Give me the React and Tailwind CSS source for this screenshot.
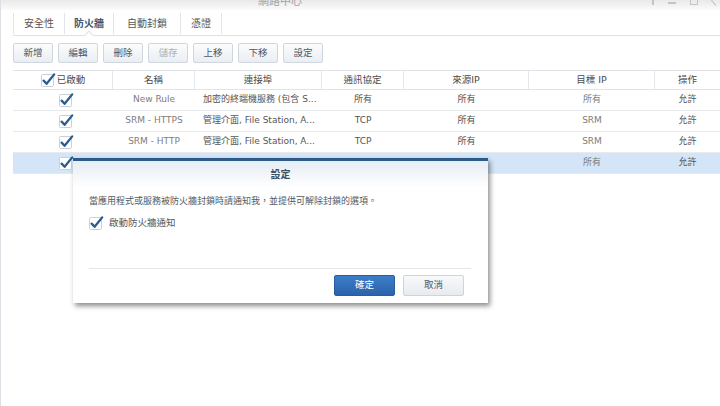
import React from "react";

const FONT = { fontFamily: '"DejaVu Sans", "Noto Sans CJK TC", sans-serif' };

function Check({ className = "" }) {
  return (
    <svg width="16" height="16" viewBox="0 0 16 16" className={className}>
      <rect x="1.5" y="2.5" width="12" height="12" rx="1" fill="#fff" stroke="#c9d0d8" />
      <path d="M3.6 8.6 L6.6 11.8 L14.2 2.4" fill="none" stroke="#2b5c90" strokeWidth="2.3" strokeLinecap="round" strokeLinejoin="round" />
    </svg>
  );
}

const cols = [
  "w-[100px]",
  "w-[82px]",
  "w-[127px]",
  "w-[82px]",
  "w-[125px]",
  "w-[126px]",
  "w-[65px]",
];

const rows = [
  { name: "New Rule", port: "加密的終端機服務 (包含 S...", proto: "所有", src: "所有", dst: "所有", act: "允許" },
  { name: "SRM - HTTPS", port: "管理介面, File Station, A...", proto: "TCP", src: "所有", dst: "SRM", act: "允許" },
  { name: "SRM - HTTP", port: "管理介面, File Station, A...", proto: "TCP", src: "所有", dst: "SRM", act: "允許" },
  { name: "", port: "", proto: "", src: "", dst: "所有", act: "允許", sel: true },
];

export default function App() {
  const tabs = [
    { t: "安全性", w: "w-[52px]", first: true },
    { t: "防火牆", w: "w-[49px]", sel: true },
    { t: "自動封鎖", w: "w-[67px]" },
    { t: "憑證", w: "w-[41px]" },
  ];
  const btns = ["新增", "編輯", "刪除", "儲存", "上移", "下移", "設定"];
  const headers = ["名稱", "連接埠", "通訊協定", "來源IP", "目標 IP", "操作"];

  return (
    <div className="relative w-[720px] h-[406px] overflow-hidden bg-white border-l border-[#dcdfe3] text-[#4f4f4f]" style={FONT}>
      {/* title bar */}
      <div className="relative h-[10px] overflow-hidden bg-gradient-to-b from-[#e9e9e9] to-[#fbfbfb]">
        <div className="absolute left-[257px] top-[-5px] text-[11px] leading-[14px] text-[#a3a3a3]">網路中心</div>
        <div className="absolute right-0 top-[-4px] flex items-center gap-[14px] pr-[2px] text-[#b8b8b8]">
          <div className="w-[2px] h-[9px] bg-[#c4c4c4]" />
          <div className="w-[8px] h-[2px] mt-[4px] bg-[#c4c4c4]" />
          <div className="w-[8px] h-[9px] border border-[#c4c4c4]" />
          <div className="w-[6px] h-[9px] border-l border-[#c4c4c4] rotate-[-40deg]" />
        </div>
      </div>

      <div className="pl-[12px]">
        {/* tabs */}
        <div className="flex h-[26px] border-b border-[#dde1e6] items-stretch">
          {tabs.map((tb) => (
            <div key={tb.t} className={`relative flex items-center justify-center mt-[3px] mb-[1px] ${tb.w} border-r border-[#e1e4e8] ${tb.first ? "border-l" : ""} text-[10px] ${tb.sel ? "font-bold text-[#3d5672]" : "text-[#555]"}`}>
              {tb.t}
              {tb.sel && (
                <div className="absolute bottom-[-5px] left-1/2 -translate-x-1/2 w-[7px] h-[7px] rotate-45 bg-white border-l border-t border-[#dde1e6]" />
              )}
            </div>
          ))}
        </div>

        {/* toolbar */}
        <div className="flex gap-[5px] mt-[7px]">
          {btns.map((b) => (
            <div key={b} className={`w-[40px] h-[20px] flex items-center justify-center rounded-[2px] border border-[#cfd6dd] bg-gradient-to-b from-[#fbfcfd] to-[#eaeef2] text-[9.5px] ${b === "儲存" ? "text-[#aab0b6]" : "text-[#4f5864]"}`}>
              {b}
            </div>
          ))}
        </div>

        {/* table */}
        <div className="mt-[7px] border-t border-[#e0e4e8]">
          <div className="flex h-[19px] border-b border-[#e0e4e8] text-[9.5px] text-[#4a4a4a]">
            <div className={`${cols[0]} flex items-center justify-center gap-[1px] border-r border-[#e3e6ea]`}>
              <Check />
              <span>已啟動</span>
            </div>
            {headers.map((h, i) => (
              <div key={h} className={`${cols[i + 1]} flex items-center justify-center ${i < headers.length - 1 ? "border-r border-[#e3e6ea]" : ""}`}>
                {h}
              </div>
            ))}
          </div>
          {rows.map((r, idx) => (
            <div key={idx} className={`flex h-[21px] border-b border-[#e8ebee] text-[9px] ${r.sel ? "bg-[#d3e5f6]" : ""}`}>
              <div className={`${cols[0]} flex items-center justify-center pl-[5px]`}>
                <Check />
              </div>
              <div className={`${cols[1]} flex items-center justify-center text-[#7d7d7d]`}>{r.name}</div>
              <div className={`${cols[2]} flex items-center pl-[8px] whitespace-nowrap overflow-hidden text-[#555]`}>{r.port}</div>
              <div className={`${cols[3]} flex items-center justify-center text-[#555]`}>{r.proto}</div>
              <div className={`${cols[4]} flex items-center justify-center text-[#555]`}>{r.src}</div>
              <div className={`${cols[5]} flex items-center justify-center text-[#7d7d7d]`}>{r.dst}</div>
              <div className={`${cols[6]} flex items-center justify-center text-[#555]`}>{r.act}</div>
            </div>
          ))}
        </div>
      </div>

      {/* dialog */}
      <div className="absolute left-[72px] top-[158px] w-[415px] h-[145px] bg-white border-t-[3px] border-[#2e5a87] shadow-[2px_3px_5px_rgba(0,0,0,0.45)] flex flex-col">
        <div className="h-[27px] flex items-center justify-center font-bold text-[10px] text-[#3e4f62] bg-gradient-to-b from-[#e6edf5] to-white">
          設定
        </div>
        <div className="px-[16px] mt-[6px] text-[9px] text-[#505a64] leading-[14px]">
          當應用程式或服務被防火牆封鎖時請通知我，並提供可解除封鎖的選項。
        </div>
        <div className="flex items-center gap-[5px] px-[15px] mt-[7px] text-[9.5px] text-[#505a64]">
          <Check />
          <span>啟動防火牆通知</span>
        </div>
        <div className="mx-[16px] mr-[17px] mt-[37px] border-t border-[#e4e7ea]" />
        <div className="flex justify-end gap-[8px] pr-[24px] mt-[6px]">
          <div className="w-[61px] h-[21px] rounded-[2px] flex items-center justify-center text-[9.5px] text-white border border-[#2a5b9c] bg-gradient-to-b from-[#3d7dc8] to-[#2a63ab]">
            確定
          </div>
          <div className="w-[61px] h-[21px] rounded-[2px] flex items-center justify-center text-[9.5px] text-[#505a64] border border-[#cdd4db] bg-gradient-to-b from-[#f8f9fb] to-[#e7ebef]">
            取消
          </div>
        </div>
      </div>
    </div>
  );
}
